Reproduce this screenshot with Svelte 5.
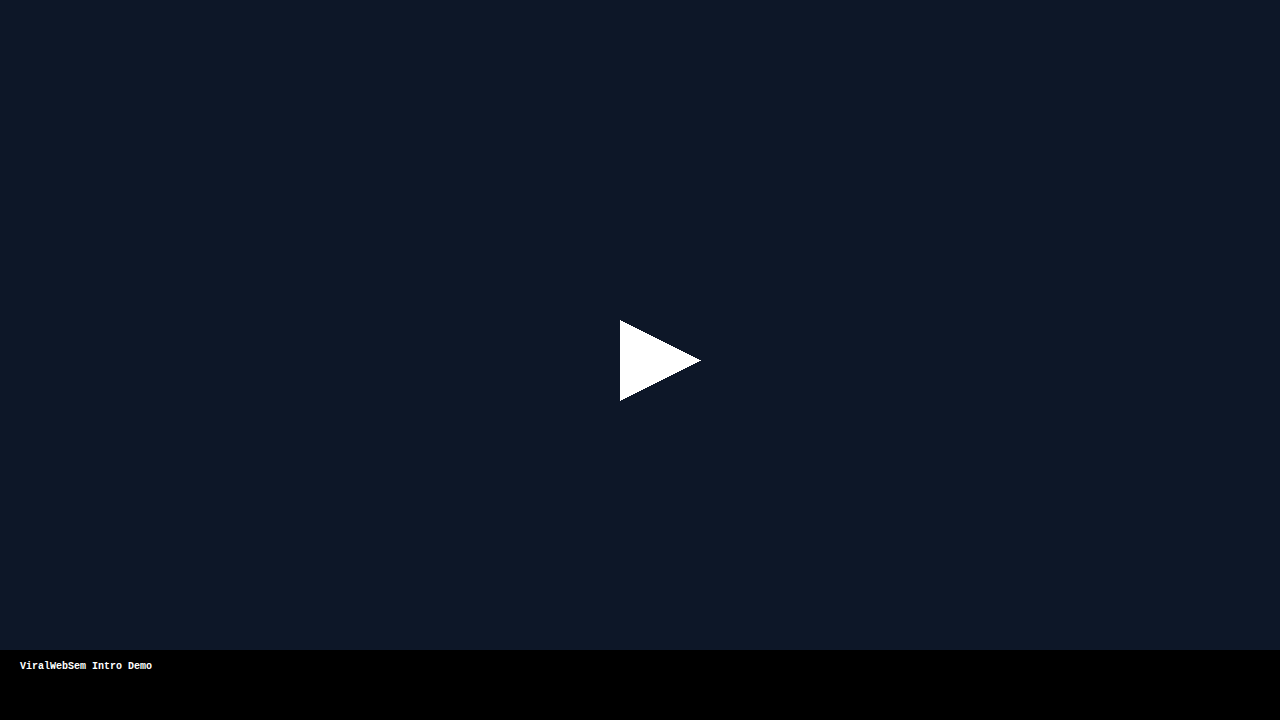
<script>
  let { title = 'ViralWebSem Intro Demo' } = $props();
</script>

<main class="player">
  <div class="stage">
    <button class="play" type="button" aria-label="Play">
      <svg viewBox="0 0 81 81" width="81" height="81" aria-hidden="true" shape-rendering="crispEdges">
        <path d="M0 0 L81 40.5 L0 81 Z" fill="#fff" />
      </svg>
    </button>
  </div>
  <footer class="caption">{title}</footer>
</main>

<style>
  :global(body) {
    margin: 0;
    background: #000;
  }

  .player {
    display: flex;
    flex-direction: column;
    min-height: 100vh;
  }

  .stage {
    flex: 1;
    display: grid;
    place-items: center;
    padding: 70px 0 0 40px;
    background: #0d1728;
  }

  .play {
    display: block;
    padding: 0;
    border: 0;
    background: none;
    cursor: pointer;
  }

  .play svg {
    display: block;
  }

  .caption {
    padding: 11px 20px 47px;
    background: #000;
    color: #fff;
    font: bold 10px/12px 'Liberation Mono', 'Courier New', monospace;
  }
</style>
